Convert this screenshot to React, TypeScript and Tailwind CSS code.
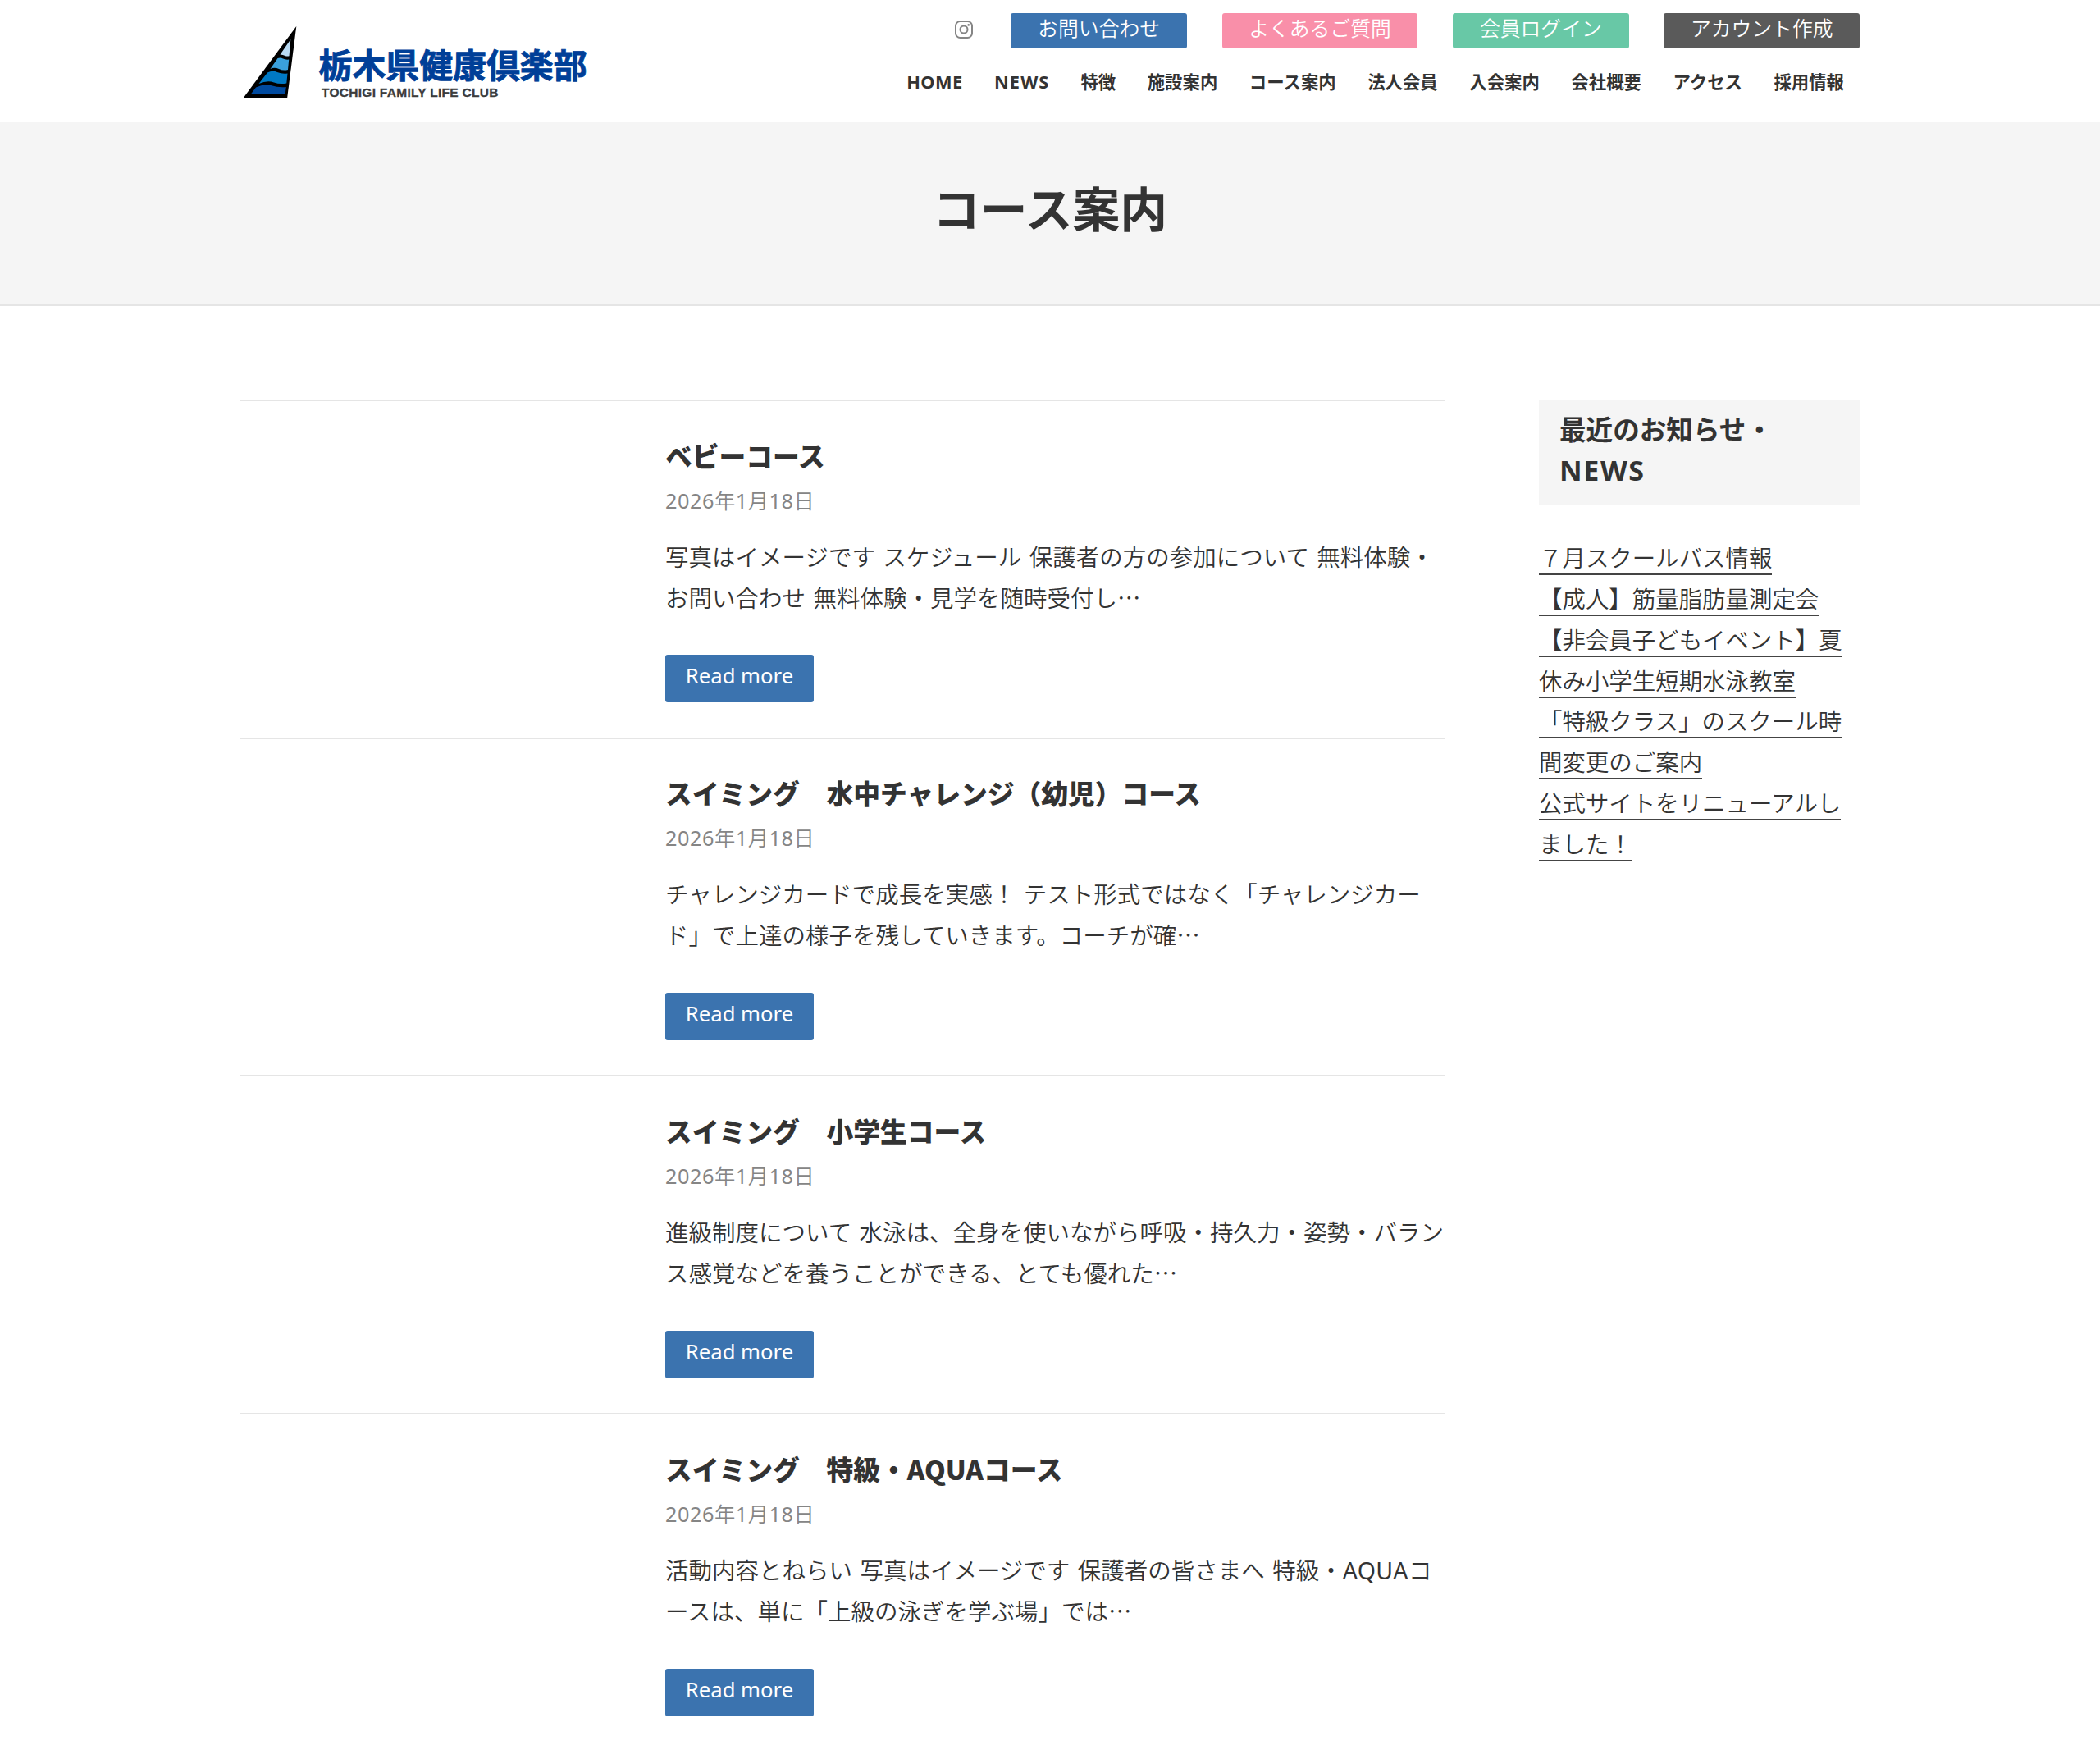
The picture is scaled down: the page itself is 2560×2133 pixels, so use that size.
import React from "react";

const buttons = [
  { label: "お問い合わせ", cls: "w-[215.1px] bg-[#3b73af]" },
  { label: "よくあるご質問", cls: "w-[238.6px] bg-[#f98fa9]" },
  { label: "会員ログイン", cls: "w-[215.1px] bg-[#68c8a6]" },
  { label: "アカウント作成", cls: "w-[238.6px] bg-[#5a5a5a]" },
];

const nav = [
  { label: "HOME", cls: "text-[21.8px] tracking-[0.4px]" },
  { label: "NEWS", cls: "text-[21.8px] tracking-[1.1px] -mr-[0.5px]" },
  { label: "特徴", cls: "" },
  { label: "施設案内", cls: "" },
  { label: "コース案内", cls: "" },
  { label: "法人会員", cls: "" },
  { label: "入会案内", cls: "" },
  { label: "会社概要", cls: "" },
  { label: "アクセス", cls: "" },
  { label: "採用情報", cls: "" },
];

const articles = [
  {
    title: "ベビーコース",
    lines: ["写真はイメージです スケジュール 保護者の方の参加について 無料体験・", "お問い合わせ 無料体験・見学を随時受付し"],
  },
  {
    title: "スイミング　水中チャレンジ（幼児）コース",
    lines: ["チャレンジカードで成長を実感！ テスト形式ではなく「チャレンジカー", "ド」で上達の様子を残していきます。コーチが確"],
  },
  {
    title: "スイミング　小学生コース",
    lines: ["進級制度について 水泳は、全身を使いながら呼吸・持久力・姿勢・バラン", "ス感覚などを養うことができる、とても優れた"],
  },
  {
    title: "スイミング　特級・AQUAコース",
    lines: ["活動内容とねらい 写真はイメージです 保護者の皆さまへ 特級・AQUAコ", "ースは、単に「上級の泳ぎを学ぶ場」では"],
  },
];

const news = [
  ["７月スクールバス情報"],
  ["【成人】筋量脂肪量測定会"],
  ["【非会員子どもイベント】夏", "休み小学生短期水泳教室"],
  ["「特級クラス」のスクール時", "間変更のご案内"],
  ["公式サイトをリニューアルし", "ました！"],
];

function Logo() {
  return (
    <a className="flex pt-[31px]">
      <svg width="68" height="90" viewBox="0 0 68 90" className="ml-[3px] shrink-0">
        <path d="M65.3 1 L0.5 88.5 L54.2 88 Z" fill="#000" />
        <path d="M58.3 17 L45.5 35.5 Q49 35.5 51.5 37 Q54 38 56.5 37.3 Z" fill="#b9daf3" />
        <path d="M42.5 40 Q46 38.8 49 40.5 Q52 42 56.2 41.5 L55 54 Q49 55.5 44 53 Q38.5 50.5 33.5 53 Z" fill="#3aa0dc" />
        <path d="M30 57.5 Q36 54.5 42 57 Q48 59.5 54.5 58.5 L53.3 70.5 Q45 72 38 69.5 Q30 66.5 19.5 71 Z" fill="#0079c4" />
        <path d="M16 75.5 Q25 71 34 73 Q44 76 52.8 75 L51.7 83.5 L9.5 84 Z" fill="#004a9f" />
      </svg>
      <div className="ml-[24.5px] pt-[22px] whitespace-nowrap">
        <div className="h-[51px] font-['Noto_Sans_CJK_JP',sans-serif] text-[40.9px] leading-[50px] font-bold text-[#003f98] [-webkit-text-stroke:0.9px_#003f98]">栃木県健康倶楽部</div>
        <div className="ml-[3.5px] font-['Liberation_Sans',sans-serif] text-[15.5px] leading-[18px] font-bold tracking-[0.28px] text-[#3c3c3c] [-webkit-text-stroke:0.3px_#3c3c3c]">TOCHIGI FAMILY LIFE CLUB</div>
      </div>
    </a>
  );
}

function InstagramIcon() {
  return (
    <svg width="22" height="22" viewBox="0 0 22 22" fill="none" stroke="#858585" strokeWidth="2" className="mt-[9px]">
      <rect x="1" y="1" width="20" height="20" rx="5.5" />
      <circle cx="11" cy="11" r="4.5" />
      <circle cx="16.7" cy="5.4" r="1.3" fill="#858585" stroke="none" />
    </svg>
  );
}

function Excerpt({ text, more }: { text: string; more?: boolean }) {
  return (
    <span className="block h-[49.9px]">
      {text.split(/(AQUA)/).map((part, i) =>
        part === "AQUA" ? (
          <span key={i} className="font-normal tracking-[0.4px]">
            {part}
          </span>
        ) : (
          part
        ),
      )}
      {more && <span className="font-['Noto_Sans_CJK_JP',sans-serif] leading-none">…</span>}
    </span>
  );
}

function PostDate({ value }: { value: string }) {
  return (
    <div className="h-[42px] text-[25.3px] leading-[42px] tracking-[0.5px] text-[#858585]">
      {value.split(/(\d+)/).map((part, i) => (
        <span key={i} className={/\d/.test(part) ? "font-normal" : ""}>
          {part}
        </span>
      ))}
    </div>
  );
}

export default function App() {
  return (
    <div lang="ja" className="h-[2133px] overflow-hidden bg-white font-['Noto_Sans','Noto_Sans_CJK_JP',sans-serif] text-[28.5px] font-[350] text-[#333]">
      <header className="mx-auto flex h-[149px] w-[1974px] justify-between">
        <Logo />
        <div className="flex flex-col items-end pt-4">
          <div className="flex">
            <InstagramIcon />
            <div className="ml-[46px] flex gap-[42.5px]">
              {buttons.map((b) => (
                <a key={b.label} className={`${b.cls} h-[43px] rounded-[3px] text-center text-[24.8px] leading-[37px] whitespace-nowrap text-white`}>
                  {b.label}
                </a>
              ))}
            </div>
          </div>
          <nav className="mt-[20px] mr-[19px] flex gap-[38.5px] text-[21.4px] leading-[42px] font-bold whitespace-nowrap">
            {nav.map((n) => (
              <a key={n.label} className={n.cls}>
                {n.label}
              </a>
            ))}
          </nav>
        </div>
      </header>

      <div className="h-[224px] border-b-2 border-[#e5e5e5] bg-[#f5f5f5] pt-[56px] text-center">
        <h1 className="text-[57.8px] leading-[100px] font-bold">コース案内</h1>
      </div>

      <div className="mx-auto flex w-[1974px] justify-between pt-[114px]">
        <main className="w-[1468px]">
          {articles.map((a) => (
            <article key={a.title} className="h-[411.7px] border-t-2 border-[#e5e5e5] pt-[40.5px] pl-[518px] whitespace-nowrap">
              <h2 className="h-[59px] font-['Noto_Sans_CJK_JP',sans-serif] text-[32.75px] leading-[50px] font-black">{a.title}</h2>
              <PostDate value="2026年1月18日" />
              <p className="mt-[24.2px] leading-[49.9px] [word-spacing:2px]">
                <Excerpt text={a.lines[0]} />
                <Excerpt text={a.lines[1]} more />
              </p>
              <a className="mt-[44px] block h-[58px] w-[181px] rounded-[3px] bg-[#3b73af] text-center text-[25.65px] leading-[52px] font-normal text-white">Read more</a>
            </article>
          ))}
        </main>
        <aside className="w-[391px]">
          <h3 className="h-[128px] bg-[#f5f5f5] pt-[12px] pl-[25px] text-[32.6px] leading-[50px] font-bold">
            最近のお知らせ・
            <br />
            <span className="text-[34px] leading-[49px] tracking-[1.6px]">NEWS</span>
          </h3>
          <ul className="mt-[41px] text-[28.45px] leading-[49.85px] whitespace-nowrap">
            {news.map((item) => (
              <li key={item[0]}>
                {item.map((line) => (
                  <a key={line} className="block h-[49.85px]">
                    <span className="inline-block h-[45px] border-b-2 border-[#444] align-top">{line}</span>
                  </a>
                ))}
              </li>
            ))}
          </ul>
        </aside>
      </div>
    </div>
  );
}
